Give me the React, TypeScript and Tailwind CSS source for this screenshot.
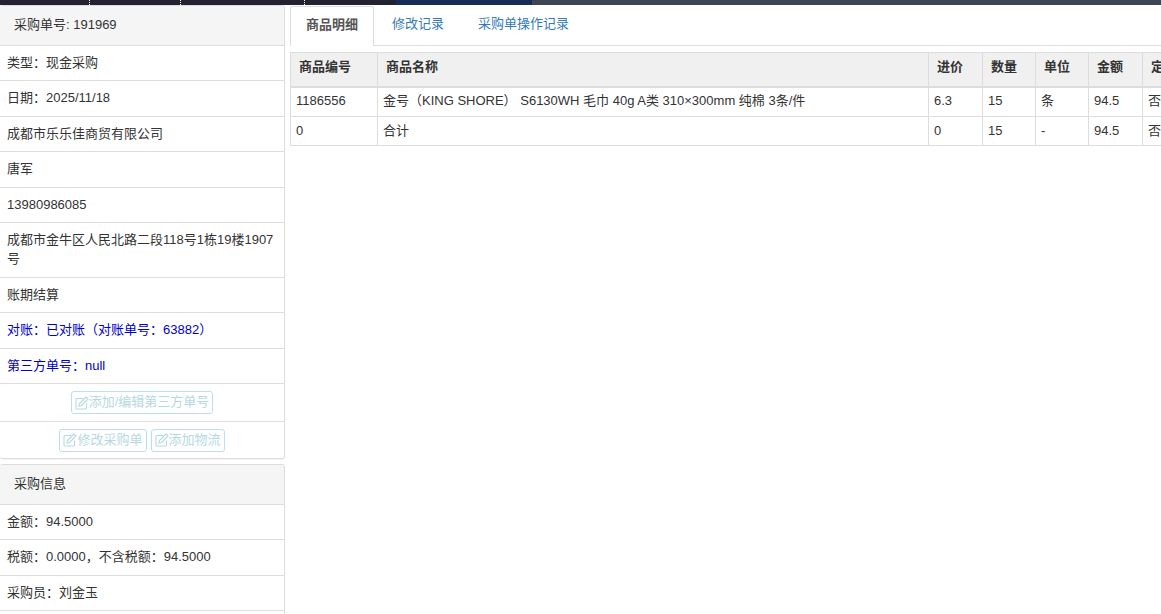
const orderRows = [
  { text: "类型：现金采购" },
  { text: "日期：2025/11/18" },
  { text: "成都市乐乐佳商贸有限公司" },
  { text: "唐军" },
  { text: "13980986085" },
  { text: "成都市金牛区人民北路二段118号1栋19楼1907号" },
  { text: "账期结算" },
  { text: "对账：已对账（对账单号：63882）", blue: true },
  { text: "第三方单号：null", blue: true },
];

const infoRows = ["金额：94.5000", "税额：0.0000，不含税额：94.5000", "采购员：刘金玉"];

const columns = [
  { name: "商品编号", width: "w-[87px]" },
  { name: "商品名称", width: "w-[551px]" },
  { name: "进价", width: "w-[54px]" },
  { name: "数量", width: "w-[53px]" },
  { name: "单位", width: "w-[53px]" },
  { name: "金额", width: "w-[54px]" },
  { name: "定制", width: "w-[54px]" },
];

const tableRows = [
  ["1186556", "金号（KING SHORE） S6130WH 毛巾 40g A类 310×300mm 纯棉 3条/件", "6.3", "15", "条", "94.5", "否"],
  ["0", "合计", "0", "15", "-", "94.5", "否"],
];

function EditIcon() {
  return (
    <svg width="14" height="14" viewBox="0 0 14 14" className="shrink-0" aria-hidden="true">
      <path d="M8 2.5H2a1 1 0 0 0-1 1v8.5a1 1 0 0 0 1 1h8.5a1 1 0 0 0 1-1V7.5" fill="none" stroke="currentColor" strokeWidth="1.1" />
      <path d="M11 1l2 2-6.5 6.5-2.8.8.8-2.8z" fill="none" stroke="currentColor" strokeWidth="1.1" strokeLinejoin="round" />
    </svg>
  );
}

function EditButton({ label }: { label: string }) {
  return (
    <span className="inline-flex h-[23px] items-center rounded-[3px] border border-[#bcdfe8] px-[3px] text-[#b5d9e3]">
      <EditIcon />
      {label}
    </span>
  );
}

function PanelHeading({ children }: { children: string }) {
  return (
    <div className="rounded-t-[3px] border-b border-[#ddd] bg-[#f5f5f5] px-[14px] py-[10px] text-[#333]">
      {children}
    </div>
  );
}

export default function App() {
  return (
    <div className="h-[614px] overflow-hidden bg-white font-['Liberation_Sans','Noto_Sans_CJK_SC',sans-serif] text-[13px] leading-[18.57px] text-[#333]">
      <div className="flex h-[5px]">
        <div className="flex w-[396px] bg-[#1f2430]">
          <div className="w-[90px] border-r border-dotted border-white" />
          <div className="w-[91px] border-r border-dotted border-white" />
          <div className="w-[124px] border-r border-dotted border-white" />
        </div>
        <div className="w-[136px] bg-[#152c55]" />
        <div className="flex-1 bg-[#3c4654]" />
      </div>

      <div className="flex">
        <aside className="w-[285px] shrink-0">
          <section className="rounded-[3px] border border-l-0 border-[#ddd] shadow-[0_1px_1px_rgba(0,0,0,0.05)]">
            <PanelHeading>采购单号: 191969</PanelHeading>
            {orderRows.map((row) => (
              <div
                key={row.text}
                className={`border-b border-[#ddd] px-[7px] py-[8px] ${row.blue ? "text-[#0000cd]" : ""}`}
              >
                {row.text}
              </div>
            ))}
            <div className="flex h-[38px] items-center justify-center border-b border-[#ddd]">
              <EditButton label="添加/编辑第三方单号" />
            </div>
            <div className="flex h-[36px] items-center justify-center gap-[4px]">
              <EditButton label="修改采购单" />
              <EditButton label="添加物流" />
            </div>
          </section>

          <section className="mt-[5px] rounded-[3px] border border-l-0 border-[#ddd]">
            <PanelHeading>采购信息</PanelHeading>
            {infoRows.map((text) => (
              <div key={text} className="border-b border-[#ddd] px-[7px] py-[8px]">
                {text}
              </div>
            ))}
            <div className="h-[36px]" />
          </section>
        </aside>

        <main className="ml-[5px] min-w-0 flex-1">
          <nav className="mt-[1px] flex h-[40px] border-b border-[#ddd]">
            <div className="h-[40px] rounded-t-[3px] border border-b-0 border-[#ddd] bg-white px-[15px] py-[9px] font-bold text-[#555]">
              商品明细
            </div>
            <div className="px-[18px] py-[9px] text-[#337ab7]">修改记录</div>
            <div className="px-[16px] py-[9px] text-[#337ab7]">采购单操作记录</div>
          </nav>

          <div className="mt-[6px] overflow-hidden">
            <table className="w-[906px] table-fixed border-collapse border border-[#ddd]">
              <thead>
                <tr className="bg-[#f0f0f0]">
                  {columns.map((col) => (
                    <th
                      key={col.name}
                      className={`${col.width} h-[34px] border border-b-2 border-[#ddd] px-[8px] pb-[3px] text-left font-bold text-[#333]`}
                    >
                      {col.name}
                    </th>
                  ))}
                </tr>
              </thead>
              <tbody>
                {tableRows.map((row, i) => (
                  <tr key={row[0]} className={i === 0 ? "h-[30px]" : "h-[29px]"}>
                    {row.map((cell, j) => (
                      <td key={j} className="border border-[#ddd] px-[5px]">
                        {cell}
                      </td>
                    ))}
                  </tr>
                ))}
              </tbody>
            </table>
          </div>
        </main>
      </div>
    </div>
  );
}
